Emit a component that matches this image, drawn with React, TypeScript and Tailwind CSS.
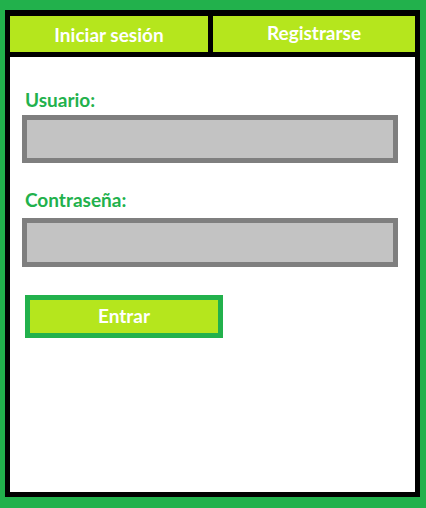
export default function App() {
    return (
        <div
            className="h-[508px] w-[426px] bg-[#22b14c] pl-[5px] pt-[10px]"
            style={{ fontFamily: 'Lato, "Open Sans", sans-serif' }}
        >
            <div className="flex h-[487px] w-[415px] flex-col border-[5px] border-t-[6px] border-black bg-white">
                <div className="flex h-[41px] border-b-[5px] border-black">
                    <button className="flex w-[198px] items-center justify-center bg-[#b5e61d] pt-[3px] text-[19px] font-bold text-white">
                        Iniciar sesión
                    </button>
                    <div className="w-[5px] bg-black" />
                    <button className="flex flex-1 items-center justify-center bg-[#b5e61d] pb-[1px] text-[19px] font-bold text-white">
                        Registrarse
                    </button>
                </div>
                <div className="flex flex-col pl-[12px] pr-[17px] pt-[31px]">
                    <label className="pl-[3px] text-[19px] font-bold leading-[24px] text-[#22b14c]">Usuario:</label>
                    <input
                        type="text"
                        className="mt-[3px] h-[48px] w-full border-[5px] border-[#7f7f7f] bg-[#c3c3c3] outline-none"
                    />
                    <label className="mt-[25px] pl-[3px] text-[19px] font-bold leading-[24px] text-[#22b14c]">
                        Contraseña:
                    </label>
                    <input
                        type="password"
                        className="mt-[6px] h-[49px] w-full border-[5px] border-[#7f7f7f] bg-[#c3c3c3] outline-none"
                    />
                    <button className="ml-[3px] mt-[28px] h-[43px] w-[198px] border-[5px] border-[#22b14c] bg-[#b5e61d] text-[19px] font-bold text-white">
                        Entrar
                    </button>
                </div>
            </div>
        </div>
    );
}
